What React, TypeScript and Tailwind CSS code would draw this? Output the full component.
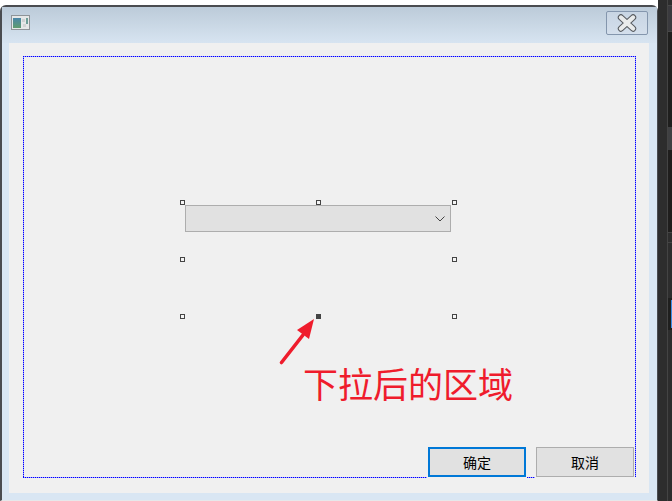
const handles = [
  { x: 180, y: 200, active: false },
  { x: 316, y: 200, active: false },
  { x: 452, y: 200, active: false },
  { x: 180, y: 257, active: false },
  { x: 452, y: 257, active: false },
  { x: 180, y: 314, active: false },
  { x: 316, y: 314, active: true },
  { x: 452, y: 314, active: false },
];

const dotsH = "absolute h-px bg-[repeating-linear-gradient(90deg,#0000ff_0_1px,#9c9cff_1px_2px)]";
const dotsV = "absolute w-px bg-[repeating-linear-gradient(180deg,#0000ff_0_1px,#9c9cff_1px_2px)]";

function WindowIcon() {
  return (
    <svg width="20" height="16" viewBox="0 0 20 16" className="ml-[9px] mt-[1px]">
      <defs>
        <linearGradient id="thumb" x1="0" y1="0" x2="0" y2="1">
          <stop offset="0" stopColor="#4a86a8" />
          <stop offset="1" stopColor="#5f9c6e" />
        </linearGradient>
      </defs>
      <rect x="0.5" y="0.5" width="18" height="14" fill="#e6e8e8" stroke="#8f9498" />
      <rect x="2" y="3" width="8" height="10" fill="url(#thumb)" />
      <rect x="11" y="4" width="3" height="3" fill="#cfd2d2" />
      <rect x="15" y="3" width="2" height="6" fill="#6f9f98" />
      <rect x="12" y="9" width="3" height="3" fill="#d2d4d4" />
    </svg>
  );
}

function CloseButton() {
  return (
    <div className="mr-[9px] flex h-[24px] w-[42px] items-center justify-center rounded-[2px] border border-[#8496ad] bg-gradient-to-b from-[#c8d5e3] to-[#d4dfec]">
      <svg width="20" height="18" viewBox="0 0 20 18">
        <path d="M4 3.5L16 14.5M16 3.5L4 14.5" stroke="#55595e" strokeWidth="6.4" strokeLinecap="round" />
        <path d="M4 3.5L16 14.5M16 3.5L4 14.5" stroke="#e9ebeb" strokeWidth="4.4" strokeLinecap="round" />
      </svg>
    </div>
  );
}

function Arrow() {
  return (
    <svg width="42" height="54" viewBox="0 0 42 54" className="absolute left-[276px] top-[316px]">
      <path d="M5.5 46.5L27 19" stroke="#ef1c2c" strokeWidth="3.6" strokeLinecap="round" />
      <path d="M38 3L21 14L33 23Z" fill="#ef1c2c" />
    </svg>
  );
}

function SideStrip() {
  return (
    <div className="flex w-[14px] shrink-0 bg-[#2d2d2d]">
      <div className="w-[9px]" />
      <div className="flex h-full w-[5px] flex-col border-l border-[#444]">
        <div className="mt-[5px] h-[27px] border-y border-[#484848] bg-[#3a3a3e]" />
        <div className="h-[95px] bg-[#1f1f1e]" />
        <div className="h-[23px] bg-[#3f4042]" />
        <div className="h-[83px] border-b border-[#444] bg-[#1f1e1d]" />
        <div className="mt-[9px] h-[56px] border-t border-[#444] bg-[#2d2d2d]" />
        <div className="flex h-[32px] justify-end bg-[#1f1f1e] py-[2px]">
          <div className="w-px bg-[#3a8ee6]" />
        </div>
      </div>
    </div>
  );
}

export default function App() {
  return (
    <div className="relative flex h-[501px] w-[672px] overflow-hidden bg-[#2d2d2d] font-['Noto_Sans_CJK_SC','Liberation_Sans',sans-serif]">
      <div className="flex w-[658px] shrink-0 flex-col bg-white pt-[5px]">
        <div className="flex min-h-0 flex-1 flex-col rounded-t-[6px] border-b border-l-2 border-r border-t-2 border-[#4a4c50] border-b-[#e6e8ea] bg-[#d9e6f3]">
          <div className="flex h-[36px] shrink-0 items-center justify-between bg-gradient-to-b from-[#bccbd9] to-[#d7e4f1] pb-[5px]">
            <WindowIcon />
            <CloseButton />
          </div>
          <div className="ml-[7px] mr-[8px] mb-[7px] flex-1 bg-[#f0f0f0]" />
        </div>
      </div>
      <SideStrip />

      {/* designer surface, sits over the client area */}
      <div className="absolute left-0 top-0 h-[501px] w-[658px]">
        <div className={`${dotsH} left-[23px] top-[56px] w-[613px]`} />
        <div className={`${dotsV} left-[23px] top-[56px] h-[422px]`} />
        <div className={`${dotsV} left-[635px] top-[56px] h-[421px]`} />
        <div className={`${dotsH} left-[23px] top-[477px] w-[404px]`} />
        <div className={`${dotsH} left-[527px] top-[477px] w-[8px]`} />

        <div className="absolute left-[185px] top-[205px] flex h-[27px] w-[266px] items-center justify-end border border-[#adadad] bg-[#e1e1e1] pr-[5px]">
          <svg width="10" height="6" viewBox="0 0 10 6">
            <path d="M0.5 0.5L5 5L9.5 0.5" fill="none" stroke="#444" strokeWidth="1" />
          </svg>
        </div>
        {handles.map((h) => (
          <div
            key={`${h.x}-${h.y}`}
            className={`absolute h-[5px] w-[5px] border border-[#444] ${h.active ? "bg-[#444]" : "bg-[#f4f4f4]"}`}
            style={{ left: h.x, top: h.y }}
          />
        ))}
        <Arrow />
        <div className="absolute left-[303px] top-[357px] text-[35px] leading-[52px] text-[#ef1c2c]">下拉后的区域</div>
        <div className="absolute left-[428px] top-[447px] flex gap-[10px]">
          <div className="flex h-[30px] w-[98px] items-center justify-center border-2 border-[#0078d7] bg-[#e1e1e1] text-[14px] text-black">确定</div>
          <div className="flex h-[30px] w-[98px] items-center justify-center border border-[#adadad] bg-[#e1e1e1] text-[14px] text-black">取消</div>
        </div>
      </div>
    </div>
  );
}
